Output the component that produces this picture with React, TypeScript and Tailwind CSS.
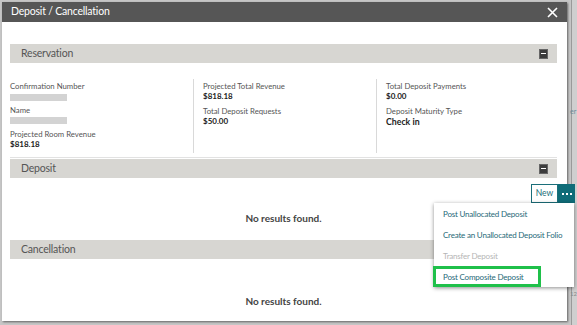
import { Fragment } from "react"

const FONT = "font-['Lato',_'Noto_Sans',_sans-serif]"

function MinusBox() {
  return (
    <span className="flex h-[10px] w-[9px] items-center justify-center border border-[#666] bg-[#3c3c3c]">
      <span className="h-[1.5px] w-[5px] bg-white" />
    </span>
  )
}

function SectionBar({ title }: { title: string }) {
  return (
    <div className="flex h-[19px] items-center justify-between bg-[#d7d6d2] pl-[11px] pr-[9px]">
      <span className="text-[10.5px] tracking-[-0.2px] text-[#555]">{title}</span>
      <MinusBox />
    </div>
  )
}

function Label({ children }: { children: string }) {
  return <div className="whitespace-nowrap text-[7.75px] leading-[10px] text-[#555]">{children}</div>
}

function Value({ children, big }: { children: string; big?: boolean }) {
  return (
    <div className={`whitespace-nowrap font-bold leading-[11px] text-[#222] ${big ? "text-[8.75px]" : "text-[8px]"}`}>
      {children}
    </div>
  )
}

function Blank() {
  return <div className="h-[7px] w-[57px] bg-[#d3d3d3]" />
}

const MENU = [
  { label: "Post Unallocated Deposit" },
  { label: "Create an Unallocated Deposit Folio" },
  { label: "Transfer Deposit", disabled: true },
  { label: "Post Composite Deposit", highlight: true },
]

export default function App() {
  return (
    <div className={`relative h-[325px] w-[577px] overflow-hidden bg-[#c6c6c6] ${FONT}`}>
      {/* page behind the dialog */}
      <div className="absolute right-0 top-0 h-full w-[6px] border-l border-[#9a9a9a] bg-[#cfcfcf]" />
      <span className="absolute left-[570px] top-[106px] text-[7px] text-[#6a8a9a]">er</span>
      <span className="absolute left-[570px] top-[289px] text-[6px] text-[#888]">12</span>

      <div className="absolute left-[2px] top-[2px] h-[319px] w-[565px] bg-white shadow-[1px_1px_2px_rgba(0,0,0,0.5)]">
        <div className="flex h-[20px] items-center justify-between bg-[#565656] pl-[9px] pr-[9px]">
          <span className="text-[10.5px] tracking-[-0.2px] text-white">Deposit / Cancellation</span>
          <svg width="11" height="11" viewBox="0 0 11 11" stroke="white" strokeWidth="1.6">
            <path d="M1 1 L10 10 M10 1 L1 10" />
          </svg>
        </div>

        <div className="pl-[8px] pr-[10px] pt-[22px]">
          <SectionBar title="Reservation" />
          <div className="grid grid-cols-[183px_183px_1fr] border-b border-[#e2e2e2] pb-[4px] pt-[16px]">
            <div className="pt-[2px]">
              <Label>Confirmation Number</Label>
              <div className="mb-[4px] mt-[3px]">
                <Blank />
              </div>
              <Label>Name</Label>
              <div className="mb-[5px] mt-[2px]">
                <Blank />
              </div>
              <Label>Projected Room Revenue</Label>
              <Value>$818.18</Value>
            </div>
            <div className="h-[74px] border-l border-[#d9d9d9] pl-[9px] pt-[2px]">
              <Label>Projected Total Revenue</Label>
              <Value>$818.18</Value>
              <div className="h-[4px]" />
              <Label>Total Deposit Requests</Label>
              <Value>$50.00</Value>
            </div>
            <div className="h-[74px] border-l border-[#d9d9d9] pl-[9px] pt-[2px]">
              <Label>Total Deposit Payments</Label>
              <Value>$0.00</Value>
              <div className="h-[4px]" />
              <Label>Deposit Maturity Type</Label>
              <Value big>Check in</Value>
            </div>
          </div>

          <div className="mt-[1px]">
            <SectionBar title="Deposit" />
          </div>
          <div className="flex justify-end pt-[6px]">
            <div className="flex h-[19px] translate-x-[18px]">
              <span className="flex w-[27px] items-center justify-center border border-[#1b6f7a] text-[8.5px] text-[#1b6f7a]">New</span>
              <span className="flex w-[17px] items-center justify-center gap-[2px] bg-[#0f6c78]">
                <span className="h-[2px] w-[2px] bg-white" />
                <span className="h-[2px] w-[2px] bg-white" />
                <span className="h-[2px] w-[2px] bg-white" />
              </span>
            </div>
          </div>
          <div className="mt-[9px] text-center text-[10px] font-bold leading-[12px] text-[#444]">No results found.</div>

          <div className="mt-[16px]">
            <SectionBar title="Cancellation" />
          </div>
          <div className="mt-[36px] text-center text-[10px] font-bold leading-[12px] text-[#444]">No results found.</div>
        </div>
      </div>

      {/* actions menu */}
      <div className="absolute left-[434px] top-[203px] w-[140px] bg-white shadow-[0_1px_4px_rgba(0,0,0,0.45)]">
        {MENU.map((m) => (
          <Fragment key={m.label}>
            <div
              className={`flex h-[21px] items-center whitespace-nowrap text-[8px] tracking-[-0.2px] ${
                m.disabled ? "text-[#b5b5b5]" : "text-[#1f6a78]"
              } ${m.highlight ? "-ml-px mr-[33px] border-[3px] border-[#1fc04a] pl-[7px]" : "pl-[9px]"}`}
            >
              {m.label}
            </div>
          </Fragment>
        ))}
      </div>
    </div>
  )
}
